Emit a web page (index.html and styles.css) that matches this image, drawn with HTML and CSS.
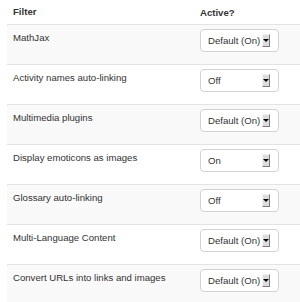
FILE: index.html
```html
<!DOCTYPE html>
<html lang="en">
<head>
  <meta charset="UTF-8" />
  <title>Filter settings</title>
  <link rel="stylesheet" href="styles.css">
</head>
<body>
  <div class="filters">
    <div class="row head">
      <div class="name">Filter</div>
      <div class="active">Active?</div>
    </div>
    <div class="row odd">
      <div class="name">MathJax</div>
      <div class="active"><div class="select">Default (On)<span class="arrow"></span></div></div>
    </div>
    <div class="row">
      <div class="name">Activity names auto-linking</div>
      <div class="active"><div class="select">Off<span class="arrow"></span></div></div>
    </div>
    <div class="row odd">
      <div class="name">Multimedia plugins</div>
      <div class="active"><div class="select">Default (On)<span class="arrow"></span></div></div>
    </div>
    <div class="row">
      <div class="name">Display emoticons as images</div>
      <div class="active"><div class="select">On<span class="arrow"></span></div></div>
    </div>
    <div class="row odd">
      <div class="name">Glossary auto-linking</div>
      <div class="active"><div class="select">Off<span class="arrow"></span></div></div>
    </div>
    <div class="row">
      <div class="name">Multi-Language Content</div>
      <div class="active"><div class="select">Default (On)<span class="arrow"></span></div></div>
    </div>
    <div class="row odd last">
      <div class="name">Convert URLs into links and images</div>
      <div class="active"><div class="select">Default (On)<span class="arrow"></span></div></div>
    </div>
  </div>
</body>
</html>
```

FILE: styles.css
```css
html, body {
  margin: 0;
  padding: 0;
  background: #fff;
  font-family: "Liberation Sans", Arial, sans-serif;
  font-size: 9.6px;
  color: #333;
}
.filters {
  margin-left: 7px;
}
.row {
  display: flex;
  height: 40px;
  border-top: 1px solid #e3e3e3;
  box-sizing: border-box;
}
.row.odd {
  background: #f9f9f9;
}
.row.last {
  height: 38px;
}
.row.head {
  height: 24px;
  border-top: none;
  font-weight: bold;
  align-items: center;
}
.name {
  width: 193px;
  padding: 7px 0 0 6px;
  box-sizing: border-box;
  line-height: 12px;
}
.head .name, .head .active {
  padding-top: 0;
}
.active {
  padding-top: 4px;
}
.select {
  position: relative;
  width: 79px;
  height: 23px;
  box-sizing: border-box;
  border: 1px solid #d2d2d2;
  border-radius: 4px;
  background: #fff;
  padding-left: 7px;
  line-height: 21px;
  white-space: nowrap;
  overflow: hidden;
}
.arrow {
  position: absolute;
  right: 8px;
  top: 4px;
  width: 8px;
  height: 13px;
  box-sizing: border-box;
  background: #dcdcdc;
  border-right: 1px solid #7a7a7a;
  border-bottom: 1px solid #7a7a7a;
  border-top: 1px solid #f2f2f2;
  border-left: 1px solid #f2f2f2;
}
.arrow::after {
  content: "";
  position: absolute;
  left: 0;
  top: 4px;
  border-left: 3px solid transparent;
  border-right: 3px solid transparent;
  border-top: 3px solid #000;
}
```
